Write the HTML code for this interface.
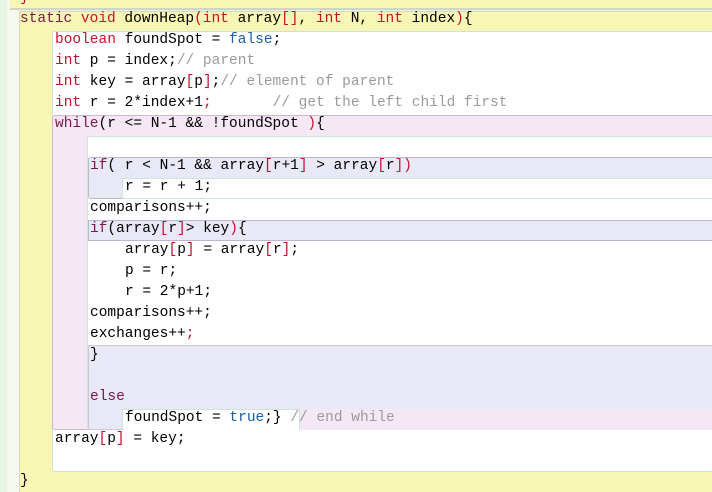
<!DOCTYPE html>
<html><head><style>
body{margin:0;width:712px;height:492px;overflow:hidden;background:#e4f6e0;position:relative;font-family:"Liberation Mono",monospace;font-size:14.5px;}
.b{position:absolute;box-sizing:border-box;}
.l{position:absolute;white-space:pre;height:21px;line-height:21px;color:#000;}
.k{color:#c8102e}.w{color:#7a1848}.v{color:#1a5fa0}.c{color:#9a9a9a}
</style></head><body>
<div class="b" style="left:7px;top:0;width:12px;height:492px;background:#f6f9f0"></div>
<div class="b" style="left:10px;top:0;width:702px;height:10px;background:#f8f6b4;border-bottom:2px solid #d4d4c4"></div>
<div class="b" style="left:19px;top:11px;width:693px;height:481px;background:#f8f6b4;border-left:1px solid #d8d8a8;border-top:1px solid #d8d8c8"></div>
<div class="b" style="left:52px;top:31px;width:662px;height:441px;background:#fff;border:1px solid #cfe0d8;border-radius:3px"></div>
<div class="b" style="left:52px;top:115px;width:662px;height:315px;background:#f5e8f5;border:1px solid #d0b8d0;border-radius:3px"></div>
<div class="b" style="left:87px;top:136px;width:627px;height:294px;background:#fff;border:1px solid #d0e4d4"></div>
<div class="b" style="left:88px;top:157px;width:626px;height:42px;background:#e8e8f6;border:1px solid #b8b8cc;border-radius:3px"></div>
<div class="b" style="left:122px;top:178px;width:592px;height:21px;background:#fff;border:1px solid #d0e4d4"></div>
<div class="b" style="left:88px;top:220px;width:626px;height:21px;background:#e8e8f6;border:1px solid #b8b8cc"></div>
<div class="b" style="left:88px;top:345px;width:626px;height:85px;background:#e8e8f6;border:1px solid #c8c8d8"></div>
<div class="b" style="left:300px;top:409px;width:414px;height:21px;background:#f5e8f5"></div>
<div class="b" style="left:122px;top:409px;width:178px;height:21px;background:#fff;border:1px solid #d0e4d4;border-bottom:none"></div>

<div class="l k" style="left:20px;top:-12px">}</div>
<div class="l" style="left:20px;top:9px"><span class="w">static</span> <span class="k">void</span> downHeap<span class="k">(</span><span class="k">int</span> array<span class="k">[]</span>, <span class="k">int</span> N, <span class="k">int</span> index<span class="k">)</span>{</div>
<div class="l" style="left:55px;top:30px"><span class="k">boolean</span> foundSpot = <span class="v">false</span>;</div>
<div class="l" style="left:55px;top:51px"><span class="k">int</span> p = index;<span class="c">// parent</span></div>
<div class="l" style="left:55px;top:72px"><span class="k">int</span> key = array<span class="k">[</span>p<span class="k">]</span>;<span class="c">// element of parent</span></div>
<div class="l" style="left:55px;top:93px"><span class="k">int</span> r = 2*index+1<span class="k">;</span>       <span class="c">// get the left child first</span></div>
<div class="l" style="left:55px;top:114px"><span class="w">while</span>(r &lt;= N-1 &amp;&amp; !foundSpot <span class="k">)</span>{</div>
<div class="l" style="left:90px;top:156px"><span class="w">if</span>( r &lt; N-1 &amp;&amp; array<span class="k">[</span>r+1<span class="k">]</span> &gt; array<span class="k">[</span>r<span class="k">])</span></div>
<div class="l" style="left:125px;top:177px">r = r + 1;</div>
<div class="l" style="left:90px;top:198px">comparisons++;</div>
<div class="l" style="left:90px;top:219px"><span class="w">if</span>(array<span class="k">[</span>r<span class="k">]</span>&gt; key<span class="k">)</span>{</div>
<div class="l" style="left:125px;top:240px">array<span class="k">[</span>p<span class="k">]</span> = array<span class="k">[</span>r<span class="k">]</span>;</div>
<div class="l" style="left:125px;top:261px">p = r;</div>
<div class="l" style="left:125px;top:282px">r = 2*p+1;</div>
<div class="l" style="left:90px;top:303px">comparisons++;</div>
<div class="l" style="left:90px;top:324px">exchanges++<span class="k">;</span></div>
<div class="l" style="left:90px;top:345px">}</div>
<div class="l w" style="left:90px;top:387px">else</div>
<div class="l" style="left:125px;top:408px">foundSpot = <span class="v">true</span>;} <span class="c">// end while</span></div>
<div class="l" style="left:55px;top:429px">array<span class="k">[</span>p<span class="k">]</span> = key;</div>
<div class="l" style="left:20px;top:471px">}</div>
</body></html>
